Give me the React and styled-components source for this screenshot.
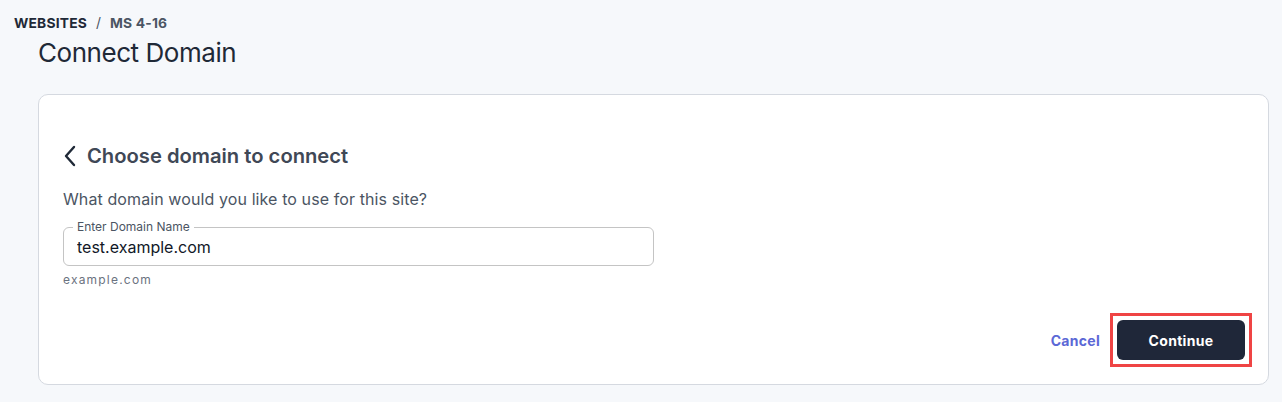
import styled, { createGlobalStyle } from 'styled-components'

const Global = createGlobalStyle`
  body {
    margin: 0;
    background: #f6f8fb;
    font-family: Inter, "Noto Sans", sans-serif;
  }
`

const Page = styled.div`
  display: flex;
  flex-direction: column;
  padding: 15px 13px 18px 14px;
`

const Crumbs = styled.div`
  display: flex;
  align-items: center;
  gap: 9px;
  font-size: 13.8px;
  font-weight: 700;
  line-height: 16px;
  color: #4b5563;
`

const Crumb = styled.span`
  color: ${p => (p.$first ? '#1f2937' : '#4b5563')};
  letter-spacing: 0.2px;
`

const Slash = styled.span`
  font-weight: 400;
  color: #4b5563;
`

const Title = styled.h1`
  margin: 5px 0 0 24px;
  font-size: 26px;
  font-weight: 400;
  line-height: 34px;
  letter-spacing: -0.45px;
  color: #1f2937;
`

const Card = styled.div`
  margin: 24px 0 0 24px;
  background: #fff;
  border: 1px solid #d5d9e0;
  border-radius: 10px;
  padding: 49px 23px 24px 24px;
  display: flex;
  flex-direction: column;
`

const Heading = styled.div`
  display: flex;
  align-items: center;
  gap: 10px;
  font-size: 20.2px;
  font-weight: 600;
  line-height: 24px;
  color: #3f4856;
`

const Question = styled.p`
  margin: 21px 0 0;
  font-size: 16px;
  line-height: 20px;
  letter-spacing: 0.1px;
  color: #4b5563;
`

const Field = styled.label`
  position: relative;
  margin-top: 18px;
  width: 591px;
  height: 39px;
  box-sizing: border-box;
  padding: 0 13px;
  border: 1px solid #c4c4c4;
  border-radius: 6px;
  display: flex;
  align-items: center;
`

const FloatLabel = styled.span`
  position: absolute;
  top: -7px;
  left: 9px;
  padding: 0 4px;
  background: #fff;
  font-size: 12px;
  line-height: 12px;
  color: #4b5563;
`

const Value = styled.input`
  border: none;
  outline: none;
  padding: 0;
  width: 100%;
  font-family: inherit;
  font-size: 16px;
  color: #111827;
  background: transparent;
`

const Help = styled.div`
  margin-top: 6px;
  font-size: 12px;
  letter-spacing: 1.2px;
  line-height: 16px;
  color: #6b7280;
`

const Actions = styled.div`
  display: flex;
  justify-content: flex-end;
  align-items: center;
  gap: 10px;
  margin-top: 32px;
`

const LinkButton = styled.button`
  border: none;
  background: none;
  padding: 0;
  font-family: inherit;
  font-size: 14px;
  font-weight: 700;
  letter-spacing: 0.3px;
  color: #5b68d6;
  cursor: pointer;
`

const Highlight = styled.span`
  display: inline-flex;
  border: 3px solid #ef4444;
  padding: 4px;
  margin: -7px -7px -7px 0;
`

const Primary = styled.button`
  width: 128px;
  height: 40px;
  border: none;
  border-radius: 6px;
  background: #1f2739;
  color: #fff;
  font-family: inherit;
  font-size: 14px;
  font-weight: 700;
  letter-spacing: 0.3px;
  cursor: pointer;
`

const Back = () => (
  <svg width="14" height="22" viewBox="0 0 14 22" fill="none">
    <path d="M11 2 L3 11 L11 20" stroke="#1f2937" strokeWidth="2.4" strokeLinecap="round" strokeLinejoin="round" />
  </svg>
)

export default function App() {
  return (
    <>
      <Global />
      <Page>
        <Crumbs>
          <Crumb $first>WEBSITES</Crumb>
          <Slash>/</Slash>
          <Crumb>MS 4-16</Crumb>
        </Crumbs>
        <Title>Connect Domain</Title>
        <Card>
          <Heading>
            <Back />
            Choose domain to connect
          </Heading>
          <Question>What domain would you like to use for this site?</Question>
          <Field>
            <FloatLabel>Enter Domain Name</FloatLabel>
            <Value defaultValue="test.example.com" />
          </Field>
          <Help>example.com</Help>
          <Actions>
            <LinkButton>Cancel</LinkButton>
            <Highlight>
              <Primary>Continue</Primary>
            </Highlight>
          </Actions>
        </Card>
      </Page>
    </>
  )
}
